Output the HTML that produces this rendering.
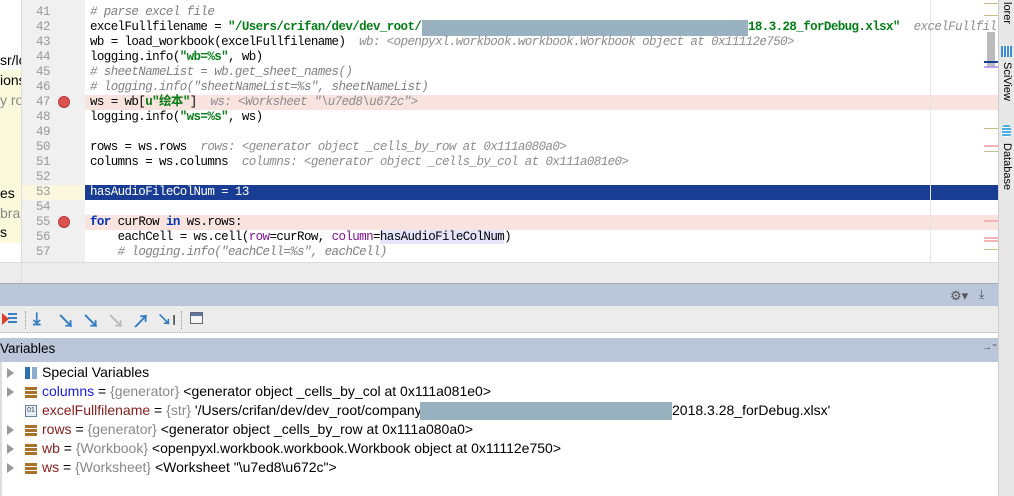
<!DOCTYPE html>
<html><head><meta charset="utf-8"><style>
*{margin:0;padding:0;box-sizing:border-box}
body{width:1014px;height:496px;overflow:hidden;background:#fff;position:relative;font-family:"Liberation Sans","Noto Sans CJK SC",sans-serif}
.a{position:absolute}
.ln{position:absolute;left:22px;width:28px;text-align:right;font:12.5px "Liberation Mono",monospace;letter-spacing:-0.5px;color:#999;line-height:15px}
.cl{position:absolute;left:90px;font:12.5px "Liberation Mono","Noto Sans CJK SC",monospace;letter-spacing:-0.6px;color:#000;line-height:15px;white-space:pre}
.c{color:#808080;font-style:italic}
.s{color:#067d17;font-weight:bold}
.k{color:#0033b3;font-weight:bold}
.p{color:#871094}
.h{color:#8c8c8c;font-style:italic}
.bp{position:absolute;left:58px;width:12px;height:12px;border-radius:50%;background:#d9534f;border:1px solid #b33}
.v{position:absolute;left:42px;font-size:14px;line-height:19px;white-space:nowrap;color:#000}
.n{color:#871c1c}.g{color:#888}
.ar{position:absolute;left:7px;width:0;height:0;border-left:7px solid #999;border-top:5px solid transparent;border-bottom:5px solid transparent}
.ic{position:absolute;left:25px;width:12px;height:11px;background:repeating-linear-gradient(#a9722a 0 3px,#fff 3px 4px)}
</style></head><body>
<div class="a" style="left:0;top:0;width:22px;height:262px;background:#fff"></div>
<div class="a" style="left:0;top:70px;width:21px;height:173px;background:#fbf9dc"></div>
<div class="a" style="left:0;top:52px;font-size:14px">sr/lo</div>
<div class="a" style="left:0;top:72px;font-size:14px">ions</div>
<div class="a" style="left:0;top:92px;font-size:14px;color:#888">y ro</div>
<div class="a" style="left:0;top:185px;font-size:14px">es</div>
<div class="a" style="left:0;top:205px;font-size:14px;color:#888">brar</div>
<div class="a" style="left:0;top:224px;font-size:14px">s</div>
<div class="a" style="left:21px;top:0;width:64px;height:262px;background:#f0f0f0;border-left:1px solid #ddd"></div>
<div class="a" style="left:22px;top:185px;width:63px;height:15px;background:#fcf8df"></div>
<div class="a" style="left:85px;top:95px;width:913px;height:15px;background:#f8e3df"></div>
<div class="a" style="left:85px;top:215px;width:913px;height:15px;background:#f8e3df"></div>
<div class="a" style="left:85px;top:185px;width:913px;height:15px;background:#1a3d94"></div>
<div class="a" style="left:930px;top:0;width:1px;height:262px;background:#e4e4e4"></div>
<div class="a" style="left:422px;top:20px;width:326px;height:16px;background:#9ab2bf"></div>
<div class="bp" style="top:96px"></div><div class="bp" style="top:216px"></div>
<div class="ln" style="top:5px">41</div><div class="ln" style="top:20px">42</div><div class="ln" style="top:35px">43</div><div class="ln" style="top:50px">44</div><div class="ln" style="top:65px">45</div><div class="ln" style="top:80px">46</div><div class="ln" style="top:95px">47</div><div class="ln" style="top:110px">48</div><div class="ln" style="top:125px">49</div><div class="ln" style="top:140px">50</div><div class="ln" style="top:155px">51</div><div class="ln" style="top:170px">52</div><div class="ln" style="top:185px">53</div><div class="ln" style="top:200px">54</div><div class="ln" style="top:215px">55</div><div class="ln" style="top:230px">56</div><div class="ln" style="top:245px">57</div>
<div class="cl" style="top:5px"><span class="c"># parse excel file</span></div>
<div class="cl" style="top:20px">excelFullfilename = <span class="s">"/Users/crifan/dev/dev_root/</span></div>
<div class="cl" style="top:20px;left:748px"><span class="s">18.3.28_forDebug.xlsx"</span>  <span class="h">excelFullfil</span></div>
<div class="cl" style="top:35px">wb = load_workbook(excelFullfilename)  <span class="h">wb: &lt;openpyxl.workbook.workbook.Workbook object at 0x11112e750&gt;</span></div>
<div class="cl" style="top:50px">logging.info(<span class="s">"wb=%s"</span>, wb)</div>
<div class="cl" style="top:65px"><span class="c"># sheetNameList = wb.get_sheet_names()</span></div>
<div class="cl" style="top:80px"><span class="c"># logging.info("sheetNameList=%s", sheetNameList)</span></div>
<div class="cl" style="top:95px">ws = wb[<span class="s">u"绘本"</span>]  <span class="h">ws: &lt;Worksheet "\u7ed8\u672c"&gt;</span></div>
<div class="cl" style="top:110px">logging.info(<span class="s">"ws=%s"</span>, ws)</div>
<div class="cl" style="top:140px">rows = ws.rows  <span class="h">rows: &lt;generator object _cells_by_row at 0x111a080a0&gt;</span></div>
<div class="cl" style="top:155px">columns = ws.columns  <span class="h">columns: &lt;generator object _cells_by_col at 0x111a081e0&gt;</span></div>
<div class="cl" style="top:185px;color:#fff">hasAudioFileColNum = 13</div>
<div class="cl" style="top:215px"><span class="k">for</span> curRow <span class="k">in</span> ws.rows:</div>
<div class="cl" style="top:230px">    eachCell = ws.cell(<span class="p">row</span>=curRow, <span class="p">column</span>=<span style="background:#e6e4fb">hasAudioFileColNum</span>)</div>
<div class="cl" style="top:245px">    <span class="c"># logging.info("eachCell=%s", eachCell)</span></div>
<div class="a" style="left:984px;top:3px;width:14px;height:1px;background:#c8c08a"></div>
<div class="a" style="left:984px;top:15px;width:14px;height:1px;background:#c8c08a"></div>
<div class="a" style="left:987px;top:32px;width:8px;height:35px;background:#bbb"></div>
<div class="a" style="left:984px;top:61px;width:14px;height:2px;background:#1a3d94"></div>
<div class="a" style="left:984px;top:66px;width:14px;height:2px;background:#b9a0f0"></div>
<div class="a" style="left:984px;top:128px;width:14px;height:1px;background:#c8c08a"></div>
<div class="a" style="left:984px;top:145px;width:14px;height:2px;background:#f5b5b5"></div>
<div class="a" style="left:984px;top:151px;width:14px;height:1px;background:#c8c08a"></div>
<div class="a" style="left:984px;top:220px;width:14px;height:2px;background:#f5b5b5"></div>
<div class="a" style="left:984px;top:237px;width:14px;height:5px;border-top:2px solid #f5b5b5;border-bottom:2px solid #f5b5b5"></div>
<div class="a" style="left:984px;top:249px;width:14px;height:1px;background:#c8c08a"></div>
<div class="a" style="left:998px;top:0;width:16px;height:496px;background:#e8e8e8;border-left:1px solid #ccc"></div>
<div class="a" style="left:1001px;top:2px;font-size:11px;writing-mode:vertical-rl">lorer</div>
<div class="a" style="left:1001px;top:46px;width:11px;height:11px;background:repeating-linear-gradient(90deg,#3a8fd0 0 2px,#fff 2px 3px)"></div>
<div class="a" style="left:1001px;top:62px;font-size:11px;writing-mode:vertical-rl">SciView</div>
<div class="a" style="left:1002px;top:125px;width:9px;height:12px;border-radius:3px;background:repeating-linear-gradient(#4aaee0 0 2px,#fff 2px 3px)"></div>
<div class="a" style="left:1001px;top:143px;font-size:11px;writing-mode:vertical-rl">Database</div>
<div class="a" style="left:0;top:262px;width:998px;height:21px;background:#ececec;border-top:1px solid #ddd"></div>
<div class="a" style="left:21px;top:262px;width:1px;height:21px;background:#ddd"></div>
<div class="a" style="left:0;top:283px;width:998px;height:23px;background:#bcc6db;border-top:1px solid #aab"></div>
<div class="a" style="left:950px;top:288px;font-size:13px;color:#555">⚙▾</div>
<div class="a" style="left:979px;top:287px;font-size:12px;color:#555">⤓</div>
<div class="a" style="left:0;top:306px;width:998px;height:27px;background:#ececec;border-bottom:1px solid #ccc"></div>
<div class="a" style="left:2px;top:313px;width:0;height:0;border-left:7px solid #d9412f;border-top:6px solid transparent;border-bottom:6px solid transparent"></div>
<div class="a" style="left:8px;top:313px;width:9px;height:11px;background:repeating-linear-gradient(#3a7fc2 0 2px,transparent 2px 4px)"></div>
<div class="a" style="left:25px;top:311px;width:1px;height:18px;border-left:1px dotted #999"></div>
<div class="a" style="left:33px;top:309px;font-size:17px;color:#2d7bc0;font-weight:bold">⤓</div>
<div class="a" style="left:57px;top:308px;font-size:18px;color:#2d7bc0;font-weight:bold">↘</div>
<div class="a" style="left:82px;top:308px;font-size:18px;color:#2d7bc0;font-weight:bold">↘</div>
<div class="a" style="left:107px;top:308px;font-size:18px;color:#bbb;font-weight:bold">↘</div>
<div class="a" style="left:132px;top:308px;font-size:18px;color:#2d7bc0;font-weight:bold">↗</div>
<div class="a" style="left:157px;top:309px;font-size:15px;color:#2d7bc0;font-weight:bold">↘<span style="color:#333;font-weight:normal">I</span></div>
<div class="a" style="left:181px;top:311px;width:1px;height:18px;border-left:1px dotted #999"></div>
<div class="a" style="left:190px;top:312px;width:13px;height:12px;border:1px solid #667;background:linear-gradient(#5a7aa0 0 3px,#f4f4f4 3px)"></div>
<div class="a" style="left:0;top:336px;width:998px;height:2px;background:#fff"></div>
<div class="a" style="left:0;top:338px;width:998px;height:24px;background:#bcc6db"></div>
<div class="a" style="left:0;top:341px;font-size:13.5px">Variables</div>
<div class="a" style="left:982px;top:342px;font-size:10px;color:#444">→⁼</div>
<div class="a" style="left:0;top:362px;width:2px;height:134px;background:#ddd"></div>
<div class="ar" style="top:368px"></div><div class="ar" style="top:387px"></div><div class="ar" style="top:425px"></div><div class="ar" style="top:444px"></div><div class="ar" style="top:463px"></div>
<div class="a" style="left:25px;top:367px;width:12px;height:12px;background:linear-gradient(90deg,#2c6fae 0 5px,transparent 5px 7px,#8aaed0 7px);"></div>
<div class="ic" style="top:387px"></div>
<div class="a" style="left:25px;top:405px;width:12px;height:12px;border:1px solid #6a7fa0;background:#e8eef6;font-size:7px;text-align:center;line-height:10px;color:#345">01</div>
<div class="ic" style="top:425px"></div><div class="ic" style="top:444px"></div><div class="ic" style="top:463px"></div>
<div class="v" style="top:363px">Special Variables</div>
<div class="v" style="top:382px"><span style="color:#1a1adc">columns</span> = <span class="g">{generator}</span> &lt;generator object _cells_by_col at 0x111a081e0&gt;</div>
<div class="v" style="top:401px"><span class="n">excelFullfilename</span> = <span class="g">{str}</span> '/Users/crifan/dev/dev_root/company/</div>
<div class="a" style="left:420px;top:402px;width:252px;height:18px;background:#97b1bf"></div>
<div class="v" style="top:401px;left:672px">2018.3.28_forDebug.xlsx'</div>
<div class="v" style="top:420px"><span class="n">rows</span> = <span class="g">{generator}</span> &lt;generator object _cells_by_row at 0x111a080a0&gt;</div>
<div class="v" style="top:439px"><span class="n">wb</span> = <span class="g">{Workbook}</span> &lt;openpyxl.workbook.workbook.Workbook object at 0x11112e750&gt;</div>
<div class="v" style="top:458px"><span class="n">ws</span> = <span class="g">{Worksheet}</span> &lt;Worksheet "\u7ed8\u672c"&gt;</div>
</body></html>
